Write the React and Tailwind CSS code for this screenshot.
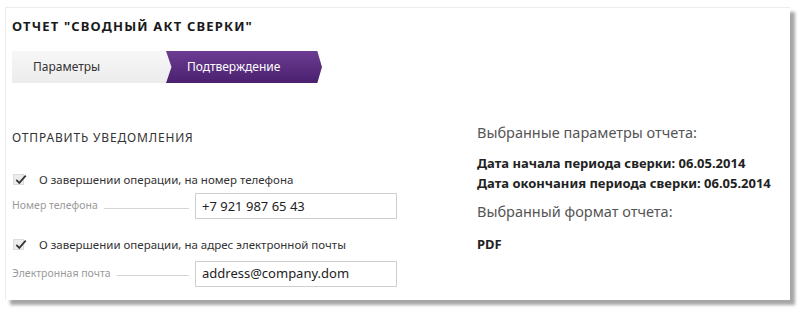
import React from "react";

const font = { fontFamily: '"Noto Sans", "Open Sans", sans-serif' };

const Check = () => (
  <span className="relative w-[11px] h-[11px] bg-[#ececec] border border-[#dcdcdc] shrink-0">
    <svg viewBox="0 0 14 12" className="absolute left-[1px] -top-[1px] w-[12px] h-[11px]">
      <path d="M1.5 6.5 L5 10 L12.5 1.5" fill="none" stroke="#333" strokeWidth="2" />
    </svg>
  </span>
);

const Field = ({ label, value }) => (
  <div className="flex items-center h-[26px]">
    <span className="text-[10.5px] text-[#9a9a9a] whitespace-nowrap">{label}</span>
    <span className="flex-1 h-px bg-[#d6d6d6] mx-[6px] mt-[4px]" />
    <div className="w-[202px] h-[26px] border border-[#cfcfcf] bg-white flex items-center px-[6px] text-[13px] text-[#222]">
      {value}
    </div>
  </div>
);

export default function App() {
  return (
    <div className="w-[800px] h-[309px] bg-white pt-[7px] pl-[5px]" style={font}>
      <div className="w-[785px] h-[293px] bg-white border-l border-t border-[#ececec] shadow-[5px_5px_3px_rgba(0,0,0,0.35)] px-[6px]">
        <h1 className="mt-[12px] text-[13px] font-bold tracking-[0.09em] text-[#1a1a1a] leading-none">
          ОТЧЕТ "СВОДНЫЙ АКТ СВЕРКИ"
        </h1>

        <div className="flex mt-[18px] h-[32px]">
          <div
            className="w-[160px] bg-gradient-to-b from-[#f7f7f7] to-[#ececec] flex items-center pl-[21px] text-[12px] text-[#333]"
            style={{ clipPath: "polygon(0 0, 96% 0, 100% 50%, 96% 100%, 0 100%)" }}
          >
            Параметры
          </div>
          <div
            className="-ml-[6px] w-[156px] bg-gradient-to-b from-[#6c3c92] to-[#4b206f] flex items-center pl-[21px] text-[12px] text-white"
            style={{ clipPath: "polygon(0 0, 97% 0, 100% 50%, 97% 100%, 0 100%, 3.5% 50%)" }}
          >
            Подтверждение
          </div>
        </div>

        <div className="flex mt-[49px]">
          <div className="w-[385px]">
            <div className="text-[12px] tracking-[0.07em] text-[#333] leading-none">ОТПРАВИТЬ УВЕДОМЛЕНИЯ</div>

            <div className="flex items-center gap-[15px] mt-[27px] pl-[1px] text-[11.5px] text-[#333]">
              <Check />
              <span>О завершении операции, на номер телефона</span>
            </div>
            <div className="mt-[5px]">
              <Field label="Номер телефона" value="+7 921 987 65 43" />
            </div>

            <div className="flex items-center gap-[15px] mt-[17px] pl-[1px] text-[11.5px] text-[#333]">
              <Check />
              <span>О завершении операции, на адрес электронной почты</span>
            </div>
            <div className="mt-[7px]">
              <Field label="Электронная почта" value="address@company.dom" />
            </div>
          </div>

          <div className="ml-[80px] -mt-[10px] text-[#222]">
            <div className="text-[14.5px] text-[#555]">Выбранные параметры отчета:</div>
            <div className="mt-[9px] text-[13px] font-bold leading-[20px]">
              <div>Дата начала периода сверки: 06.05.2014</div>
              <div>Дата окончания периода сверки: 06.05.2014</div>
            </div>
            <div className="mt-[8px] text-[14.5px] text-[#555]">Выбранный формат отчета:</div>
            <div className="mt-[12px] text-[13px] font-bold">PDF</div>
          </div>
        </div>
      </div>
    </div>
  );
}
